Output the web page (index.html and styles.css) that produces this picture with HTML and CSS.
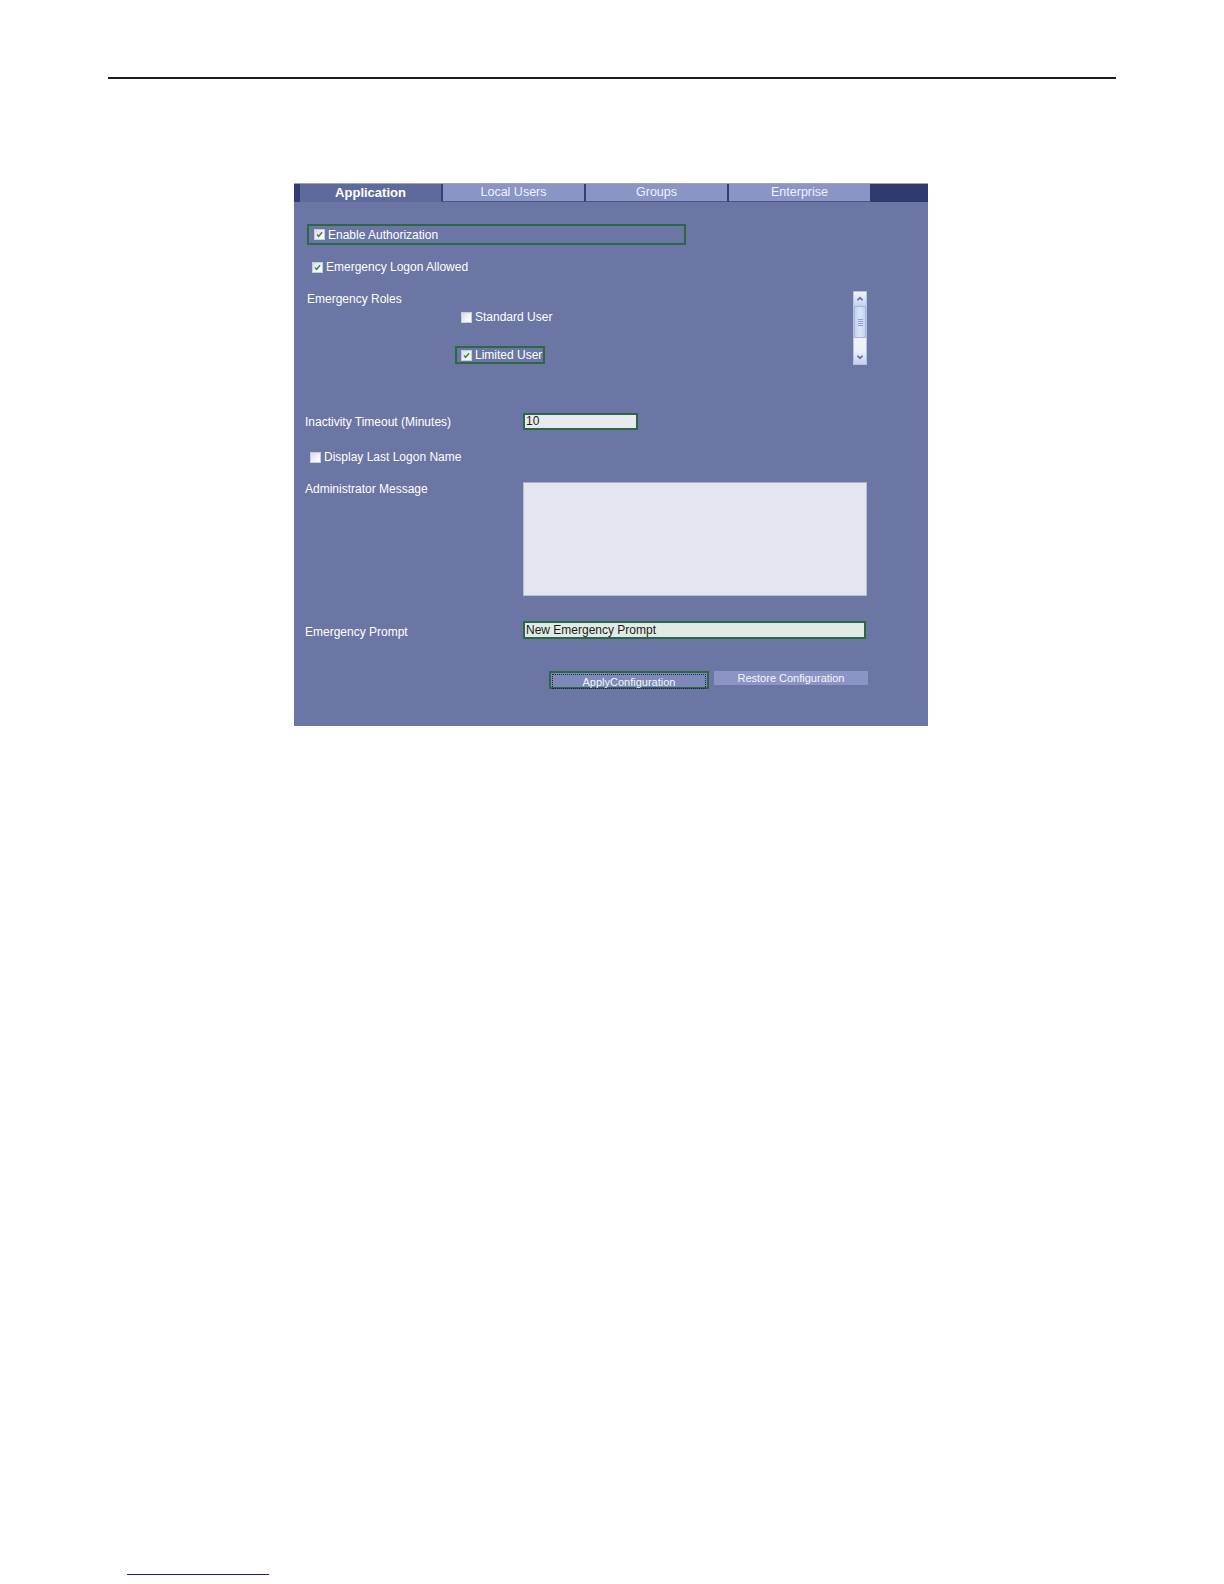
FILE: index.html
```html
<!DOCTYPE html>
<html>
<head>
<meta charset="utf-8">
<title>Application Authorization</title>
<link rel="stylesheet" href="styles.css">
</head>
<body>
<div class="page">
  <div class="rule"></div>
  <div class="panel">
    <div class="tabs">
      <div class="tab-edge"></div>
      <div class="tab active">Application</div>
      <div class="tab">Local Users</div>
      <div class="tab">Groups</div>
      <div class="tab last">Enterprise</div>
      <div class="tab-fill"></div>
    </div>

    <div class="row-enable focusbox">
      <span class="cb checked"><svg viewBox="0 0 11 11"><path d="M2.5 5.5 L4.5 7.8 L8.6 2.8" /></svg></span>
      <span class="txt">Enable Authorization</span>
    </div>

    <div class="row-logon">
      <span class="cb checked"><svg viewBox="0 0 11 11"><path d="M2.5 5.5 L4.5 7.8 L8.6 2.8" /></svg></span>
      <span class="txt">Emergency Logon Allowed</span>
    </div>

    <div class="roles">
      <div class="roles-label">Emergency Roles</div>
      <div class="roles-list">
        <div class="role">
          <span class="cb"></span>
          <span class="txt">Standard User</span>
        </div>
        <div class="role role-focus">
          <span class="cb checked"><svg viewBox="0 0 11 11"><path d="M2.5 5.5 L4.5 7.8 L8.6 2.8" /></svg></span>
          <span class="txt">Limited User</span>
        </div>
      </div>
      <div class="scrollbar">
        <div class="sb-btn"><svg viewBox="0 0 14 14"><path d="M4 8.5 L7 5.5 L10 8.5" /></svg></div>
        <div class="sb-thumb"><span></span><span></span><span></span><span></span></div>
        <div class="sb-track"></div>
        <div class="sb-btn"><svg viewBox="0 0 14 14"><path d="M4 5.5 L7 8.5 L10 5.5" /></svg></div>
      </div>
    </div>

    <div class="row-field row-timeout">
      <div class="label">Inactivity Timeout (Minutes)</div>
      <div class="input short">10</div>
    </div>

    <div class="row-display">
      <span class="cb"></span>
      <span class="txt">Display Last Logon Name</span>
    </div>

    <div class="row-field row-admin">
      <div class="label">Administrator Message</div>
      <div class="textarea"></div>
    </div>

    <div class="row-field row-prompt">
      <div class="label">Emergency Prompt</div>
      <div class="input long">New Emergency Prompt</div>
    </div>

    <div class="buttons">
      <div class="btn apply"><span class="btn-inner">ApplyConfiguration</span></div>
      <div class="btn restore">Restore Configuration</div>
    </div>
  </div>
  <div class="footer-link"></div>
</div>
</body>
</html>
```

FILE: styles.css
```css
html, body {
  margin: 0;
  padding: 0;
  background: #ffffff;
  width: 1224px;
  height: 1584px;
  overflow: hidden;
}

.page {
  padding-top: 77px;
  height: 1584px;
  box-sizing: border-box;
  overflow: hidden;
  font-family: "Liberation Sans", Arial, sans-serif;
}

.rule {
  margin-left: 108px;
  width: 1008px;
  height: 2px;
  background: #1d1d1d;
}

.panel {
  margin-top: 104px;
  margin-left: 294px;
  width: 634px;
  height: 543px;
  background: #6b76a5;
  box-sizing: border-box;
  color: #ffffff;
  font-size: 12px;
  overflow: hidden;
}

/* Tabs */
.tabs {
  display: flex;
  height: 19px;
  border-top: 1px solid #a3a3ad;
  box-sizing: border-box;
}

.tab-edge {
  width: 6px;
  background: #323d72;
}

.tab {
  width: 143px;
  background: #8a95c6;
  border-right: 2px solid #333f75;
  border-bottom: 1px solid #4a5588;
  box-sizing: border-box;
  text-align: center;
  font-size: 12.5px;
  line-height: 17px;
  color: #eef0fa;
}

.tab.active {
  background: #5e6a9b;
  font-weight: bold;
  font-size: 13px;
  color: #ffffff;
  border-bottom: 1px solid #5e6a9b;
}

.tab.last {
  width: 141px;
  border-right: none;
}

.tab-fill {
  flex: 1;
  background: #2f3a6f;
}

/* Checkbox */
.cb {
  display: inline-block;
  width: 11px;
  height: 11px;
  background: linear-gradient(135deg, #d7dbe6 0%, #f4f5f9 60%, #ffffff 100%);
  border: 1px solid #c8ccd8;
  box-sizing: border-box;
  flex: none;
}

.cb svg {
  display: block;
  width: 100%;
  height: 100%;
}

.cb svg path {
  fill: none;
  stroke: #2f8a35;
  stroke-width: 1.8;
}

.txt {
  line-height: 16px;
  white-space: nowrap;
}

.focusbox {
  border: 2px solid #2c6844;
  box-sizing: border-box;
}

.row-enable {
  display: flex;
  align-items: center;
  gap: 3px;
  margin-top: 22px;
  margin-left: 13px;
  width: 379px;
  height: 21px;
  padding-left: 5px;
}

.row-logon {
  display: flex;
  align-items: center;
  gap: 3px;
  margin-top: 14px;
  margin-left: 18px;
  height: 16px;
}

/* Roles */
.roles {
  display: flex;
  margin-top: 16px;
  height: 74px;
}

.roles-label {
  width: 148px;
  margin-left: 13px;
  line-height: 16px;
}

.roles-list {
  display: flex;
  flex-direction: column;
  align-items: flex-start;
  gap: 20px;
  padding-top: 17px;
  width: 398px;
}

.role {
  display: flex;
  align-items: center;
  gap: 3px;
  height: 18px;
  padding-left: 4px;
  padding-right: 1px;
  border: 2px solid transparent;
  box-sizing: border-box;
}

.role.role-focus {
  border-color: #2c6844;
}

.scrollbar {
  display: flex;
  flex-direction: column;
  width: 14px;
  height: 74px;
  background: #dfe5f3;
  border: 1px solid #b7c1dd;
  box-sizing: border-box;
}

.sb-btn {
  height: 14px;
  background: linear-gradient(180deg, #eef2fb, #c6d1ee);
}

.sb-btn svg {
  display: block;
  width: 100%;
  height: 100%;
}

.sb-btn svg path {
  fill: none;
  stroke: #4d6185;
  stroke-width: 1.6;
}

.sb-thumb {
  height: 30px;
  background: linear-gradient(90deg, #c6d3f1, #dbe3f7, #c6d3f1);
  border: 1px solid #a7b6dc;
  display: flex;
  flex-direction: column;
  align-items: center;
  justify-content: center;
  gap: 1px;
}

.sb-thumb span {
  display: block;
  width: 5px;
  height: 1px;
  background: #8c9fcb;
}

.sb-track {
  flex: 1;
  background: #eef1f8;
}

/* Field rows */
.row-field {
  display: flex;
  margin-left: 11px;
}

.label {
  width: 218px;
  line-height: 16px;
  white-space: nowrap;
}

.row-timeout {
  margin-top: 48px;
  align-items: center;
}

.input {
  height: 17px;
  border: 2px solid #2c6844;
  box-sizing: border-box;
  background: #e7ebee;
  color: #1b1b1b;
  font-size: 12px;
  line-height: 13px;
  padding-left: 1px;
  white-space: nowrap;
}

.input.short {
  width: 115px;
}

.row-display {
  display: flex;
  align-items: center;
  gap: 3px;
  margin-top: 19px;
  margin-left: 16px;
  height: 16px;
}

.row-admin {
  margin-top: 17px;
}

.row-admin .label {
  margin-top: -1px;
}

.textarea {
  width: 344px;
  height: 114px;
  background: #e3e6f1;
  border: 1px solid #b9bfd3;
  border-top-color: #a9aec2;
  box-sizing: border-box;
}

.row-prompt {
  margin-top: 24px;
  align-items: center;
}

.row-prompt .label {
  margin-top: 4px;
}

.input.long {
  width: 343px;
  height: 18px;
  background: #e1ebe5;
  line-height: 14px;
}

/* Buttons */
.buttons {
  display: flex;
  align-items: flex-start;
  gap: 5px;
  margin-top: 31px;
  margin-left: 255px;
}

.btn {
  font-size: 11px;
  color: #f4f5fb;
  text-align: center;
  box-sizing: border-box;
  white-space: nowrap;
}

.btn.apply {
  width: 160px;
  height: 18px;
  border: 2px solid #2c6844;
  background: #7d89b9;
  padding: 1px;
}

.btn-inner {
  display: block;
  height: 12px;
  line-height: 12px;
  border: 1px dotted #1d2340;
  padding-top: 1px;
}

.btn.restore {
  width: 154px;
  height: 14px;
  line-height: 14px;
  background: #8a95c6;
}

.footer-link {
  margin-top: 848px;
  margin-left: 127px;
  width: 142px;
  height: 1px;
  background: #1a1a8c;
}
```
